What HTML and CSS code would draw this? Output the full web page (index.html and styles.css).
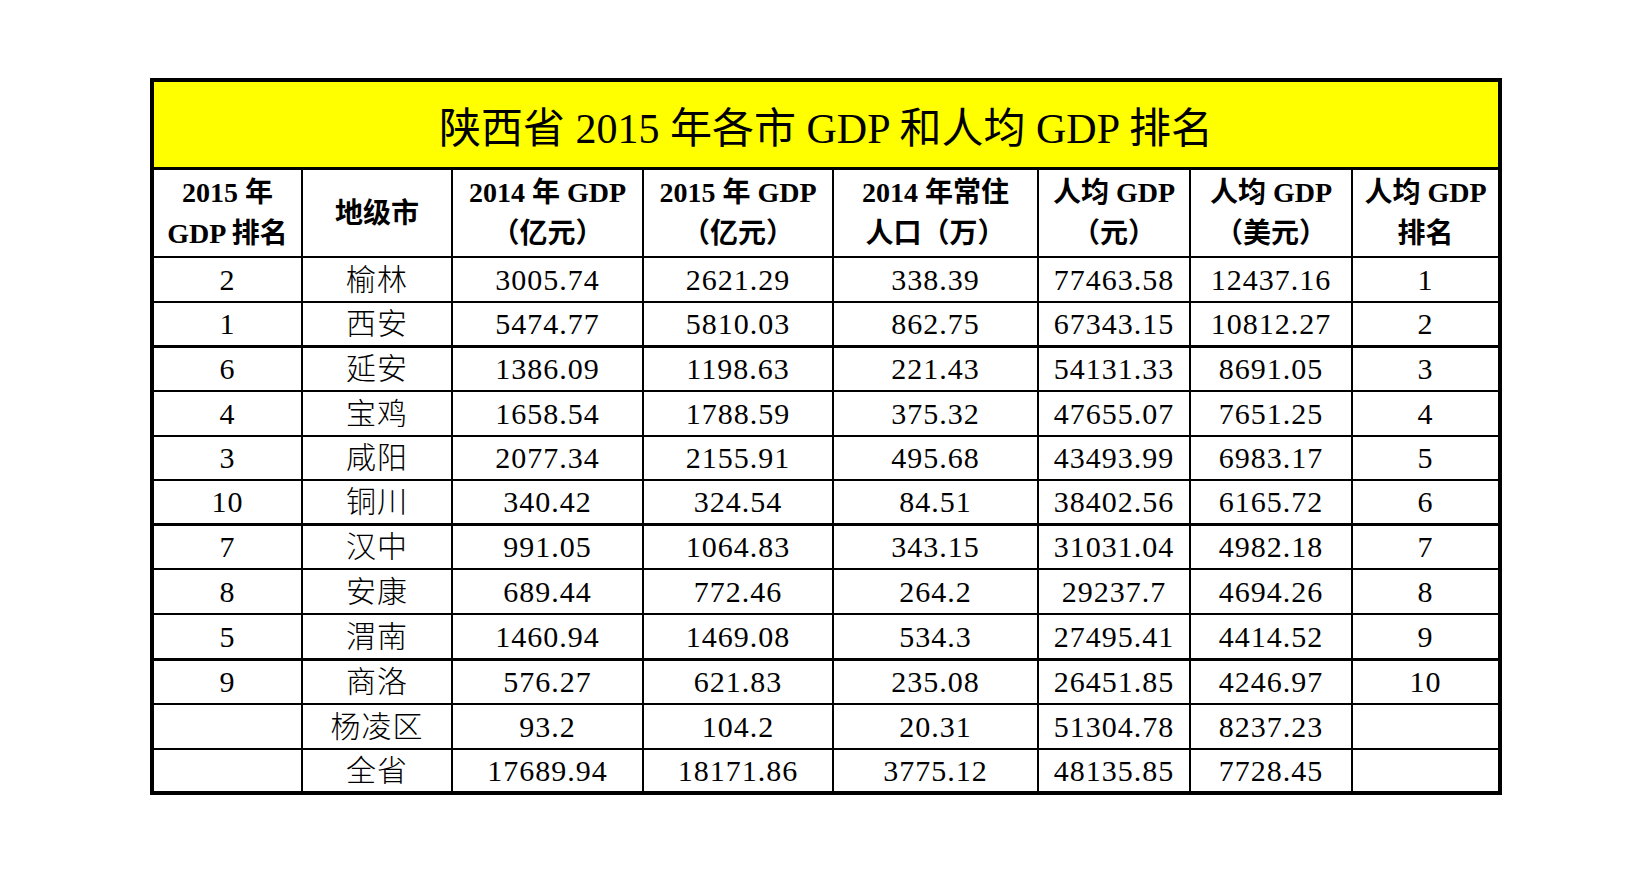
FILE: index.html
```html
<!DOCTYPE html>
<html lang="zh-CN">
<head>
<meta charset="utf-8">
<title>陕西省2015年各市GDP和人均GDP排名</title>
<link rel="stylesheet" href="styles.css">
</head>
<body>
<div class="sheet">
  <div class="title">陕西省 2015 年各市 GDP 和人均 GDP 排名</div>
  <div class="grid">
    <div class="cell head">2015 年<br>GDP 排名</div>
    <div class="cell head">地级市</div>
    <div class="cell head">2014 年 GDP<br>（亿元）</div>
    <div class="cell head">2015 年 GDP<br>（亿元）</div>
    <div class="cell head">2014 年常住<br>人口（万）</div>
    <div class="cell head">人均 GDP<br>（元）</div>
    <div class="cell head">人均 GDP<br>（美元）</div>
    <div class="cell head">人均 GDP<br>排名</div>

    <div class="cell">2</div><div class="cell">榆林</div><div class="cell">3005.74</div><div class="cell">2621.29</div><div class="cell">338.39</div><div class="cell">77463.58</div><div class="cell">12437.16</div><div class="cell">1</div>

    <div class="cell thick">1</div><div class="cell thick">西安</div><div class="cell thick">5474.77</div><div class="cell thick">5810.03</div><div class="cell thick">862.75</div><div class="cell thick">67343.15</div><div class="cell thick">10812.27</div><div class="cell thick">2</div>

    <div class="cell">6</div><div class="cell">延安</div><div class="cell">1386.09</div><div class="cell">1198.63</div><div class="cell">221.43</div><div class="cell">54131.33</div><div class="cell">8691.05</div><div class="cell">3</div>

    <div class="cell">4</div><div class="cell">宝鸡</div><div class="cell">1658.54</div><div class="cell">1788.59</div><div class="cell">375.32</div><div class="cell">47655.07</div><div class="cell">7651.25</div><div class="cell">4</div>

    <div class="cell">3</div><div class="cell">咸阳</div><div class="cell">2077.34</div><div class="cell">2155.91</div><div class="cell">495.68</div><div class="cell">43493.99</div><div class="cell">6983.17</div><div class="cell">5</div>

    <div class="cell thick">10</div><div class="cell thick">铜川</div><div class="cell thick">340.42</div><div class="cell thick">324.54</div><div class="cell thick">84.51</div><div class="cell thick">38402.56</div><div class="cell thick">6165.72</div><div class="cell thick">6</div>

    <div class="cell">7</div><div class="cell">汉中</div><div class="cell">991.05</div><div class="cell">1064.83</div><div class="cell">343.15</div><div class="cell">31031.04</div><div class="cell">4982.18</div><div class="cell">7</div>

    <div class="cell">8</div><div class="cell">安康</div><div class="cell">689.44</div><div class="cell">772.46</div><div class="cell">264.2</div><div class="cell">29237.7</div><div class="cell">4694.26</div><div class="cell">8</div>

    <div class="cell thick">5</div><div class="cell thick">渭南</div><div class="cell thick">1460.94</div><div class="cell thick">1469.08</div><div class="cell thick">534.3</div><div class="cell thick">27495.41</div><div class="cell thick">4414.52</div><div class="cell thick">9</div>

    <div class="cell">9</div><div class="cell">商洛</div><div class="cell">576.27</div><div class="cell">621.83</div><div class="cell">235.08</div><div class="cell">26451.85</div><div class="cell">4246.97</div><div class="cell">10</div>

    <div class="cell"></div><div class="cell">杨凌区</div><div class="cell">93.2</div><div class="cell">104.2</div><div class="cell">20.31</div><div class="cell">51304.78</div><div class="cell">8237.23</div><div class="cell"></div>

    <div class="cell"></div><div class="cell">全省</div><div class="cell">17689.94</div><div class="cell">18171.86</div><div class="cell">3775.12</div><div class="cell">48135.85</div><div class="cell">7728.45</div><div class="cell"></div>
  </div>
</div>
</body>
</html>
```
FILE: styles.css
```css
html, body {
  margin: 0;
  padding: 0;
  background: #ffffff;
}

body {
  font-family: "Liberation Serif", "Noto Sans CJK SC", serif;
  color: #000000;
}

.sheet {
  width: 1344px;
  margin: 78px 0 0 150px;
  border: 4px solid #000000;
}

.title {
  height: 85px;
  border-bottom: 3px solid #000000;
  background: #ffff00;
  display: flex;
  align-items: center;
  justify-content: center;
  font-size: 42px;
  font-weight: 400;
  white-space: nowrap;
}

.grid {
  display: grid;
  grid-template-columns: 147px 148px 189px 188px 203px 150px 160px 145px;
  grid-template-rows: 86px 43px 43px 42px 43px 42px 43px 42px 43px 44px 42px 43px 41px;
  gap: 2px;
  background: #000000;
}

.cell {
  background: #ffffff;
  display: flex;
  align-items: center;
  justify-content: center;
  text-align: center;
  font-size: 30px;
  font-weight: 300;
  line-height: 1;
  letter-spacing: 1px;
  white-space: nowrap;
}

.cell.thick {
  border-bottom: 1px solid #000000;
}

.cell.head {
  font-size: 28px;
  font-weight: 700;
  line-height: 41px;
  letter-spacing: 0;
}
```
